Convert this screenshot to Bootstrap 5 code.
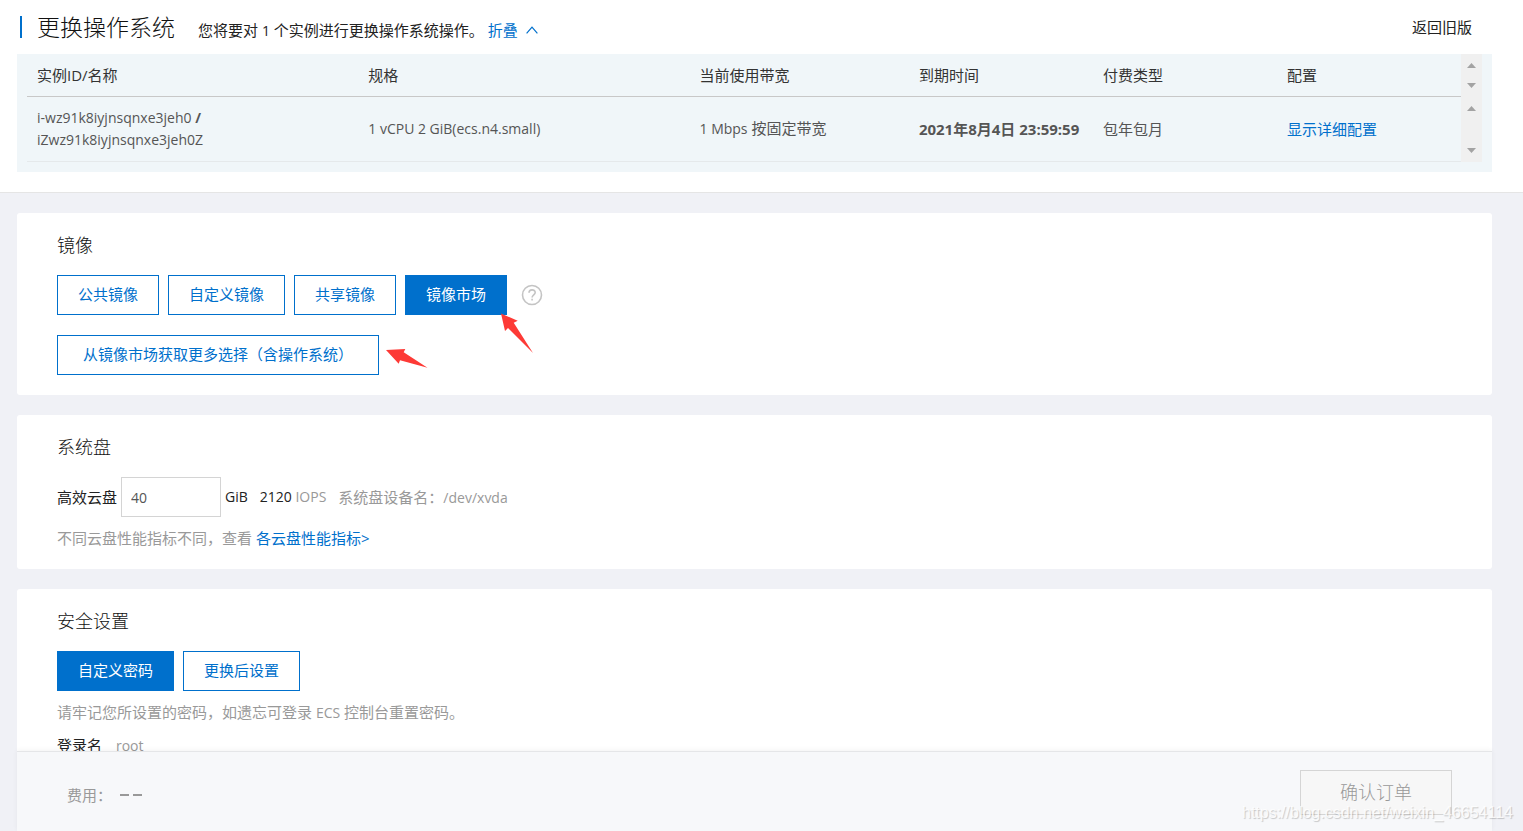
<!DOCTYPE html>
<html lang="zh-CN">
<head>
<meta charset="utf-8">
<meta name="viewport" content="width=device-width, initial-scale=1">
<title>更换操作系统</title>
<link href="https://cdn.jsdelivr.net/npm/bootstrap@5.3.0/dist/css/bootstrap.min.css" rel="stylesheet">
<style>
:root { --brand: #0070cc; --muted: #999; --ink: #222; }
body { font-family: "Open Sans", "Noto Sans CJK SC", sans-serif; font-size: 15px; line-height: 22px; color: var(--ink); background: #f0f1f6; }
a { color: var(--brand); text-decoration: none; }
.latin { font-size: 14px; }
.page-head { padding: 0 31px 20px 17px; border-bottom: 1px solid #e5e5e5; }
.title-row { height: 54px; padding: 0 20px 0 3px; }
.title-bar { width: 2px; height: 22px; background: var(--brand); }
.page-title { font-size: 23px; line-height: 30px; font-weight: 300; color: #111; margin: 0 23px 0 15px; }
.summary { padding: 6px 0 0; }
.instances { background: #f0f6f9; padding: 0 10px 10px; }
.instances .table { --bs-table-bg: transparent; table-layout: fixed; color: #555; }
.instances th, .instances td { padding: 0 10px; vertical-align: middle; }
.instances th { height: 42px; font-weight: 400; color: #333; border-bottom: 1px solid #c8c8c8; }
.instances td { height: 65px; border-bottom: 1px solid #e5e9eb; }
.w-id { width: 23.1%; }
.w-net { width: 15.3%; }
.rail { width: 21px; background: #f0f0f0; }
.rail-part { padding: 8px 0; }
.rail-head { height: 43px; }
.rail-body { height: 65px; }
.panels { padding: 20px 31px 0 17px; min-height: 0; }
.panel { background: #fff; border-radius: 3px; padding: 20px 40px; margin-bottom: 20px; }
.panel h2 { font-size: 18px; line-height: 24px; font-weight: 300; color: #111; margin: 0 0 18px; }
.opts { gap: 9px; }
.opt { height: 40px; padding: 0 20px 2px; border-radius: 0; font-size: 15px; line-height: 22px; --bs-btn-color: var(--brand); --bs-btn-bg: #fff; --bs-btn-border-color: var(--brand); }
.opt.active { --bs-btn-active-color: #fff; --bs-btn-active-bg: var(--brand); --bs-btn-active-border-color: var(--brand); }
.opt-wide { padding: 0 25px 2px; }
.help { margin-left: 5px; }
.arrow-a { left: 95px; top: 37px; }
.arrow-b { left: 100%; top: 12px; margin-left: 5px; }
.disk { width: 100px; height: 40px; margin: 0 4px; padding: 0 9px; border: 1px solid #d4d4d4; border-radius: 0; font-size: 14px; color: #555; }
.dim { color: var(--muted); }
.gap-m { margin-left: 12px; }
.login-name { margin-left: 10px; }
.below { margin-top: 10px; }
.pay-bar { height: 80px; margin: 0 31px 0 17px; padding: 2px 40px 0 50px; background: #f7f8fa; border-top: 1px solid #e5e6e8; box-shadow: 0 -1px 5px #0000000d; }
.confirm { width: 152px; height: 45px; border-radius: 0; font-size: 18px; font-weight: 300; --bs-btn-disabled-color: #999; --bs-btn-disabled-bg: #f7f7f7; --bs-btn-disabled-border-color: #d5d5d5; --bs-btn-disabled-opacity: 1; }
.dash { width: 9px; height: 2px; background: var(--muted); }
.watermark { right: 10px; bottom: 8px; font: 16px/20px "Liberation Sans", sans-serif; color: #ffffffd9; text-shadow: 1px 1px 1px #00000033; }
</style>
</head>
<body class="vh-100 d-flex flex-column overflow-hidden position-relative">
<header class="page-head bg-white">
  <div class="title-row d-flex align-items-center">
    <span class="title-bar"></span>
    <h1 class="page-title">更换操作系统</h1>
    <div class="summary">您将要对 <span class="latin">1</span> 个实例进行更换操作系统操作。
      <a href="#instances">折叠
        <svg class="ms-1" width="12" height="8" viewBox="0 0 12 8" fill="none" stroke="currentColor" stroke-width="1.2" style="vertical-align:2px"><path d="M.6 7.3 6 1.2l5.4 6.1"/></svg></a>
    </div>
    <a class="ms-auto text-reset" href="#old">返回旧版</a>
  </div>
  <div id="instances" class="instances d-flex">
    <table class="table mb-0 flex-fill">
      <thead>
        <tr><th class="w-id">实例ID/名称</th><th class="w-id">规格</th><th class="w-net">当前使用带宽</th><th>到期时间</th><th>付费类型</th><th>配置</th></tr>
      </thead>
      <tbody>
        <tr>
          <td class="latin">i-wz91k8iyjnsqnxe3jeh0 <b>/</b><br>iZwz91k8iyjnsqnxe3jeh0Z</td>
          <td class="latin">1 vCPU 2 GiB(ecs.n4.small)</td>
          <td><span class="latin">1 Mbps</span> 按固定带宽</td>
          <td class="fw-bold text-nowrap">2021年8月4日 23:59:59</td>
          <td>包年包月</td>
          <td><a href="#detail">显示详细配置</a></td>
        </tr>
      </tbody>
    </table>
    <div class="rail flex-shrink-0" aria-hidden="true">
      <div class="rail-part rail-head d-flex flex-column align-items-center justify-content-between">
        <svg width="9" height="7" fill="#a3a3a3"><path d="M0 6 4.500 1 9 6z"/></svg>
        <svg width="9" height="7" fill="#a3a3a3"><path d="M0 1 4.500 6 9 1z"/></svg>
      </div>
      <div class="rail-part rail-body d-flex flex-column align-items-center justify-content-between">
        <svg width="9" height="7" fill="#a3a3a3"><path d="M0 6 4.500 1 9 6z"/></svg>
        <svg width="9" height="7" fill="#a3a3a3"><path d="M0 1 4.500 6 9 1z"/></svg>
      </div>
    </div>
  </div>
</header>

<main class="panels flex-fill overflow-hidden">
  <section class="panel">
    <h2>镜像</h2>
    <div class="opts d-flex align-items-center">
      <button type="button" class="btn opt">公共镜像</button>
      <button type="button" class="btn opt">自定义镜像</button>
      <button type="button" class="btn opt">共享镜像</button>
      <div class="position-relative">
        <button type="button" class="btn opt active">镜像市场</button>
        <svg class="arrow-a position-absolute" width="36" height="43" viewBox="0 0 36 43" fill="#fd3a36"><path d="M1 1.500 17.700 8.700 13.700 10.700 33 41 8 16 5 19z"/></svg>
      </div>
      <button type="button" class="btn p-0 border-0 help d-flex" aria-label="帮助">
        <svg width="22" height="22" viewBox="0 0 22 22" fill="none" stroke="#c4c4c4" stroke-width="1.6"><circle cx="11" cy="11" r="9.500"/><path d="M8 8.800c0-4 6.200-3.800 6.200-.3 0 2.200-3.100 2.500-3.100 5"/><path d="M11.100 14.800v1.800"/></svg>
      </button>
    </div>
    <div class="d-flex mt-3 pt-1">
      <div class="position-relative">
        <button type="button" class="btn opt opt-wide">从镜像市场获取更多选择（含操作系统）</button>
        <svg class="arrow-b position-absolute" width="44" height="22" viewBox="0 0 44 22" fill="#fd3a36"><path d="M2 3 21.300 2 19.700 5.300 43.500 20.700 16 13.300 14.700 16.700z"/></svg>
      </div>
    </div>
  </section>

  <section class="panel">
    <h2>系统盘</h2>
    <div class="d-flex align-items-center">
      <label for="disk">高效云盘</label>
      <input id="disk" class="form-control disk" type="text" value="40">
      <span class="latin">GiB</span>
      <span class="latin gap-m">2120 <span class="dim">IOPS</span></span>
      <span class="gap-m dim">系统盘设备名：<span class="latin">/dev/xvda</span></span>
    </div>
    <div class="below dim">不同云盘性能指标不同，查看 <a href="#perf">各云盘性能指标&gt;</a></div>
  </section>

  <section class="panel">
    <h2>安全设置</h2>
    <div class="opts d-flex">
      <button type="button" class="btn opt active">自定义密码</button>
      <button type="button" class="btn opt">更换后设置</button>
    </div>
    <div class="below dim">请牢记您所设置的密码，如遗忘可登录 <span class="latin">ECS</span> 控制台重置密码。</div>
    <div class="below">登录名 <span class="login-name dim latin">root</span></div>
  </section>
</main>

<footer class="pay-bar d-flex align-items-center flex-shrink-0">
  <span class="dim pt-1">费用：</span>
  <span class="d-flex gap-1 ms-2 pt-1" aria-label="暂无"><span class="dash"></span><span class="dash"></span></span>
  <button type="button" class="btn confirm ms-auto" disabled>确认订单</button>
</footer>
<div class="watermark position-absolute">https://blog.csdn.net/weixin_46654114</div>
<script src="https://cdn.jsdelivr.net/npm/bootstrap@5.3.0/dist/js/bootstrap.bundle.min.js"></script>
</body>
</html>
